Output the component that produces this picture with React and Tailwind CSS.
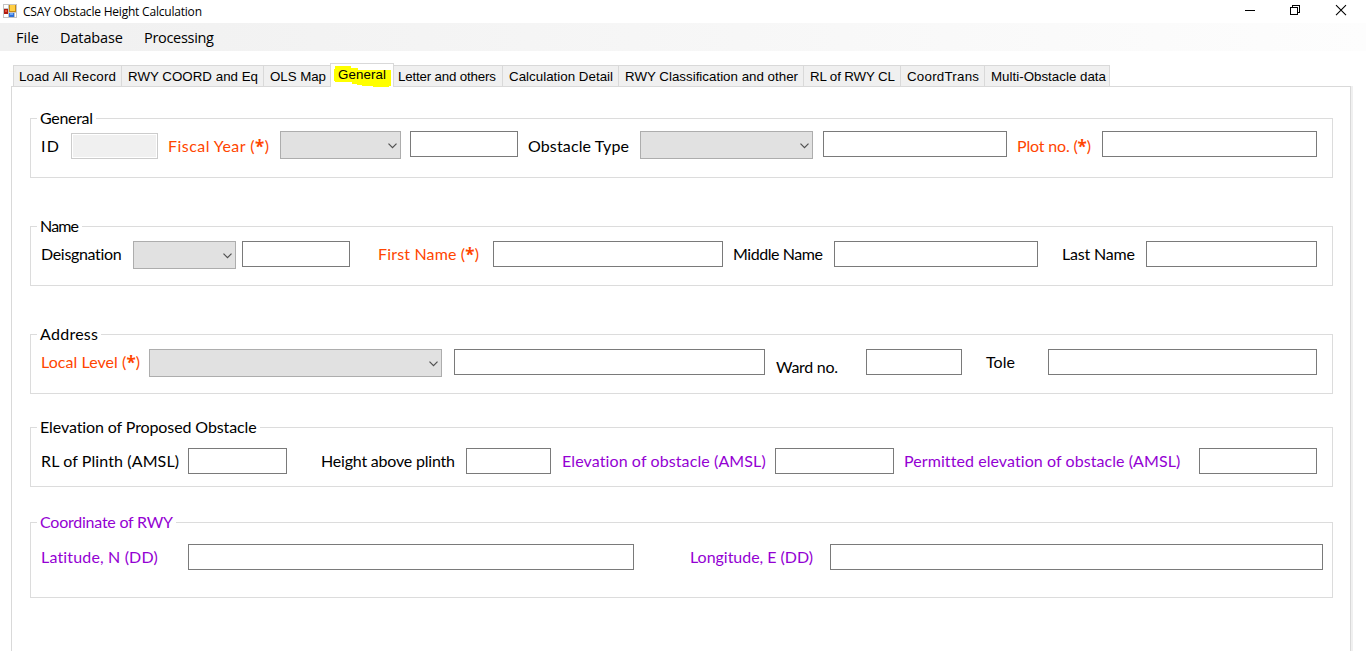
import React, { useLayoutEffect, useRef } from "react";

// Single line of text spread evenly over a given width in pixels.
function FitText({ text, width, className = "" }) {
  const ref = useRef(null);
  useLayoutEffect(() => {
    const el = ref.current;
    el.style.letterSpacing = "0px";
    const natural = el.getBoundingClientRect().width;
    el.style.letterSpacing = `${(width - natural) / Math.max(1, text.length - 1)}px`;
  }, [text, width]);
  const parts = text.split("*");
  return (
    <span className={`block shrink-0 whitespace-nowrap ${className}`} style={{ width }}>
      <span ref={ref} className="inline-block">
        {parts[0]}
        {parts.length > 1 && <b className="relative top-px font-['Open_Sans'] text-[17px] leading-none font-bold">*</b>}
        {parts[1]}
      </span>
    </span>
  );
}

const tones = {
  black: "text-black",
  orange: "text-[#ff4500]",
  violet: "text-[#9400d3]",
};

function Label({ text, width, tone = "black", className = "" }) {
  return (
    <FitText
      text={text}
      width={width}
      className={`h-5 font-['Lato',sans-serif] text-[16px] leading-5 ${tones[tone]} ${className}`}
    />
  );
}

function Field({ className }) {
  return <input className={`h-[26px] shrink-0 border border-[#7a7a7a] bg-white outline-none ${className}`} />;
}

function Combo({ className }) {
  return (
    <div className={`flex h-7 shrink-0 items-center justify-end border border-[#adadad] bg-[#e1e1e1] pt-[2px] pr-[3px] ${className}`}>
      <svg width="9" height="6" viewBox="0 0 9 6" fill="none">
        <path d="M0.5 0.7 4.5 4.7 8.5 0.7" stroke="#505050" strokeWidth="1.2" />
      </svg>
    </div>
  );
}

function Group({ title, titleWidth, tone, className, children }) {
  return (
    <section className={`relative flex w-[1303px] items-start border border-[#dcdcdc] ${className}`}>
      <div className="absolute -top-[11px] left-[6px] bg-white pr-[3px] pl-[3px]">
        <Label text={title} width={titleWidth} tone={tone} />
      </div>
      {children}
    </section>
  );
}

function Tab({ text, width, className }) {
  return (
    <div className={`flex h-[21px] shrink-0 border-t border-r border-[#d9d9d9] bg-[#f0f0f0] ${className}`}>
      <FitText text={text} width={width} className="text-[13.33px] leading-[22px]" />
    </div>
  );
}

function AppIcon() {
  return (
    <svg width="14" height="14" viewBox="0 0 14 14" shapeRendering="crispEdges">
      <rect width="14" height="14" fill="#c4c4c4" />
      <rect x="1" y="1" width="4" height="3" fill="#fff" />
      <rect x="1" y="10" width="4" height="3" fill="#fff" />
      <rect x="1" y="5" width="4" height="5" fill="#b01c10" />
      <rect x="2" y="6" width="2" height="2" fill="#e8503c" />
      <rect x="6" y="1" width="7" height="7" fill="#c58a10" />
      <rect x="7" y="1" width="5" height="6" fill="#ffcf45" />
      <rect x="6" y="9" width="5" height="4" fill="#2f6fd8" />
      <rect x="7" y="9" width="3" height="2" fill="#6fa8f5" />
      <rect x="12" y="9" width="1" height="4" fill="#fff" />
    </svg>
  );
}

export default function App() {
  return (
    <div className="flex h-[651px] w-[1366px] flex-col overflow-hidden bg-white font-['Liberation_Sans',Arial,sans-serif] text-black">
      <header className="flex h-[23px] shrink-0 items-start">
        <div className="mt-1 ml-[3px]">
          <AppIcon />
        </div>
        <FitText
          text="CSAY Obstacle Height Calculation"
          width={179}
          className="mt-[2px] ml-[6px] font-['Open_Sans',sans-serif] text-[12px] leading-5"
        />
        <div className="mt-[4px] ml-auto flex pr-[19px]">
          <svg width="102" height="13" viewBox="0 0 102 13" fill="none" stroke="#000">
            <path d="M0 6.5h10" shapeRendering="crispEdges" />
            <path d="M45.5 3.5h7v7h-7zM47.5 3V1.5h7v7H53" shapeRendering="crispEdges" />
            <path d="M91 1.2 101 11.2M101 1.2 91 11.2" strokeWidth="1.1" />
          </svg>
        </div>
      </header>

      <nav className="flex h-7 shrink-0 bg-linear-to-r from-[#f0f0f0] to-[#fdfdfd] pl-4 font-['Open_Sans',sans-serif] text-[14.5px] leading-[30px]">
        <FitText text="File" width={23} />
        <FitText text="Database" width={63} className="ml-[21px]" />
        <FitText text="Processing" width={70} className="ml-[21px]" />
      </nav>

      <div className="z-10 mt-3 -mb-px flex h-6 shrink-0 items-end pl-[13px]">
        <Tab text="Load All Record" width={97} className="mb-px w-[109px] border-l pl-[5px]" />
        <Tab text="RWY COORD and Eq" width={130} className="mb-px w-[142px] pl-[6px]" />
        <Tab text="OLS Map" width={56} className="mb-px w-[66px] border-r-0 pl-[6px]" />
        <div className="relative h-6 w-16 shrink-0 border-x border-t border-[#d9d9d9] bg-white pl-[7px]">
          <svg className="absolute top-[1px] left-[3px]" width="58" height="23" viewBox="0 0 58 23">
            <path
              d="M1 1H17V2.5H24V4.5H38V5H57V21H55V22H39V21H28V20L18 19V17H1V16H0V4H1Z"
              fill="#ffff00"
              shapeRendering="crispEdges"
            />
          </svg>
          <FitText text="General" width={48} className="relative text-[13.33px] leading-[22px]" />
        </div>
        <Tab text="Letter and others" width={98} className="mb-px w-[109px] pl-[4px]" />
        <Tab text="Calculation Detail" width={104} className="mb-px w-[116px] pl-[6px]" />
        <Tab text="RWY Classification and other" width={173} className="mb-px w-[185px] pl-[6px]" />
        <Tab text="RL of RWY CL" width={85} className="mb-px w-[97px] pl-[6px]" />
        <Tab text="CoordTrans" width={72} className="mb-px w-[84px] pl-[6px]" />
        <Tab text="Multi-Obstacle data" width={115} className="mb-px w-[125px] pl-[6px]" />
      </div>

      <div className="ml-[11px] flex w-[1342px] grow border-r-2 border-[#f0f0f0]">
        <main className="flex w-[1340px] flex-col border-x border-t border-[#d9d9d9] pt-[31px] pl-[18px]">
          <Group title="General" titleWidth={53} className="h-[60px]">
            <Label text="ID" width={18} className="mt-[17px] ml-[10px]" />
            <div className="mt-[14px] ml-[12px] h-[26px] w-[87px] shrink-0 border border-[#cccccc] bg-[#f0f0f0] shadow-[inset_0_0_0_1px_#fff]" />
            <Label text="Fiscal Year (*)" width={101} tone="orange" className="mt-[17px] ml-[10px]" />
            <Combo className="mt-[12px] ml-[11px] w-[121px]" />
            <Field className="mt-[12px] ml-[9px] w-[108px]" />
            <Label text="Obstacle Type" width={101} className="mt-[17px] ml-[10px]" />
            <Combo className="mt-[12px] ml-[11px] w-[173px]" />
            <Field className="mt-[12px] ml-[10px] w-[184px]" />
            <Label text="Plot no. (*)" width={74} tone="orange" className="mt-[17px] ml-[10px]" />
            <Field className="mt-[12px] ml-[11px] w-[215px]" />
          </Group>

          <Group title="Name" titleWidth={39} className="mt-12 h-[60px]">
            <Label text="Deisgnation" width={81} className="mt-[17px] ml-[10px]" />
            <Combo className="mt-[14px] ml-[11px] w-[103px]" />
            <Field className="mt-[14px] ml-[6px] w-[108px]" />
            <Label text="First Name (*)" width={101} tone="orange" className="mt-[17px] ml-[28px]" />
            <Field className="mt-[14px] ml-[14px] w-[230px]" />
            <Label text="Middle Name" width={90} className="mt-[17px] ml-[10px]" />
            <Field className="mt-[14px] ml-[11px] w-[204px]" />
            <Label text="Last Name" width={73} className="mt-[17px] ml-[24px]" />
            <Field className="mt-[14px] ml-[11px] w-[171px]" />
          </Group>

          <Group title="Address" titleWidth={58} className="mt-12 h-[60px]">
            <Label text="Local Level (*)" width={99} tone="orange" className="mt-[17px] ml-[10px]" />
            <Combo className="mt-[14px] ml-[9px] w-[293px]" />
            <Field className="mt-[14px] ml-[12px] w-[311px]" />
            <Label text="Ward no." width={62} className="mt-[22px] ml-[11px]" />
            <Field className="mt-[14px] ml-[28px] w-[96px]" />
            <Label text="Tole" width={29} className="mt-[17px] ml-[24px]" />
            <Field className="mt-[14px] ml-[33px] w-[269px]" />
          </Group>

          <Group title="Elevation of Proposed Obstacle" titleWidth={217} className="mt-[33px] h-[60px]">
            <Label text="RL of Plinth (AMSL)" width={138} className="mt-[23px] ml-[10px]" />
            <Field className="mt-[20px] ml-[9px] w-[99px]" />
            <Label text="Height above plinth" width={134} className="mt-[23px] ml-[34px]" />
            <Field className="mt-[20px] ml-[11px] w-[85px]" />
            <Label text="Elevation of obstacle (AMSL)" width={204} tone="violet" className="mt-[23px] ml-[11px]" />
            <Field className="mt-[20px] ml-[9px] w-[119px]" />
            <Label text="Permitted elevation of obstacle (AMSL)" width={276} tone="violet" className="mt-[23px] ml-[10px]" />
            <Field className="mt-[20px] ml-[19px] w-[118px]" />
          </Group>

          <Group title="Coordinate of RWY" titleWidth={133} tone="violet" className="mt-[35px] h-[76px]">
            <Label text="Latitude, N (DD)" width={117} tone="violet" className="mt-[24px] ml-[10px]" />
            <Field className="mt-[21px] ml-[30px] w-[446px]" />
            <Label text="Longitude, E (DD)" width={123} tone="violet" className="mt-[24px] ml-[56px]" />
            <Field className="mt-[21px] ml-[17px] w-[493px]" />
          </Group>
        </main>
      </div>
    </div>
  );
}
